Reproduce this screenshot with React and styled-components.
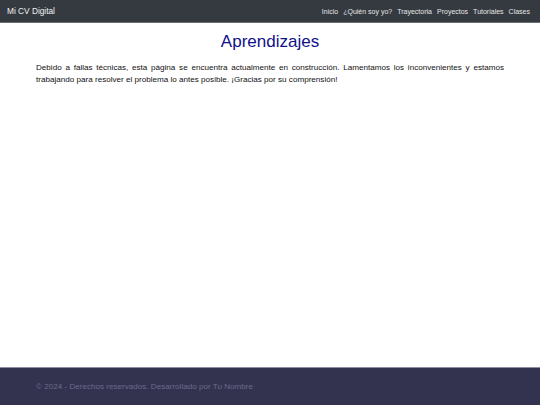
import React from "react";
import styled, { createGlobalStyle } from "styled-components";

const Global = createGlobalStyle`
  html, body { margin: 0; padding: 0; height: 100%; background: #fff; }
  #root { min-height: 100%; }
  body { font-family: "Liberation Sans", Arial, sans-serif; }
`;

const Page = styled.div`
  display: flex;
  flex-direction: column;
  height: 405px;
`;

const NavBar = styled.nav`
  display: flex;
  align-items: center;
  justify-content: space-between;
  height: 22px;
  padding: 0 10px 0 7px;
  background: #343a40;
  border-bottom: 1px solid #6a6e73;
  flex-shrink: 0;
`;

const Brand = styled.span`
  color: #f2f2f2;
  font-size: 8.3px;
`;

const Links = styled.ul`
  display: flex;
  gap: 5px;
  margin: 0;
  padding: 0;
  list-style: none;
`;

const LinkItem = styled.li`
  color: #e6e6e6;
  font-size: 7px;
`;

const Main = styled.main`
  flex: 1;
  padding: 8px 36px 0;
`;

const Title = styled.h1`
  margin: 0 0 9px;
  text-align: center;
  color: #10108a;
  font-size: 17px;
  font-weight: normal;
  line-height: 22px;
`;

const Text = styled.p`
  margin: 0;
  text-align: justify;
  color: #111;
  font-size: 8.1px;
  line-height: 12px;
`;

const Footer = styled.footer`
  height: 37px;
  display: flex;
  align-items: center;
  padding: 0 36px;
  background: #33334f;
  border-top: 1px solid #8d8da2;
  flex-shrink: 0;
`;

const FooterText = styled.span`
  color: #6a6a8c;
  font-size: 8.1px;
`;

const links = ["Inicio", "¿Quién soy yo?", "Trayectoria", "Proyectos", "Tutoriales", "Clases"];

export default function App() {
  return (
    <Page>
      <Global />
      <NavBar>
        <Brand>Mi CV Digital</Brand>
        <Links>
          {links.map((l) => (
            <LinkItem key={l}>{l}</LinkItem>
          ))}
        </Links>
      </NavBar>
      <Main>
        <Title>Aprendizajes</Title>
        <Text>
          Debido a fallas técnicas, esta página se encuentra actualmente en construcción. Lamentamos los
          inconvenientes y estamos trabajando para resolver el problema lo antes posible. ¡Gracias por su
          comprensión!
        </Text>
      </Main>
      <Footer>
        <FooterText>© 2024 - Derechos reservados. Desarrollado por Tu Nombre</FooterText>
      </Footer>
    </Page>
  );
}
